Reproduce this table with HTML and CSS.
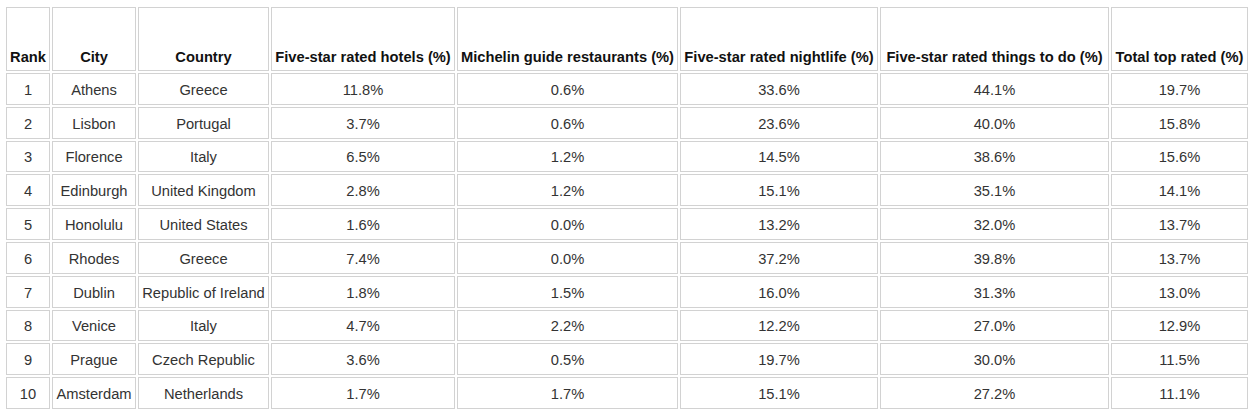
FILE: index.html
```html
<!DOCTYPE html>
<html>
<head>
<meta charset="utf-8">
<link rel="stylesheet" href="styles.css">
</head>
<body>
<table class="rank-table">
  <thead>
    <tr>
      <th class="c-rank">Rank</th>
      <th class="c-city">City</th>
      <th class="c-country">Country</th>
      <th class="c-hotels">Five-star rated hotels (%)</th>
      <th class="c-mich">Michelin guide restaurants (%)</th>
      <th class="c-night">Five-star rated nightlife (%)</th>
      <th class="c-things">Five-star rated things to do (%)</th>
      <th class="c-total">Total top rated (%)</th>
    </tr>
  </thead>
  <tbody>
    <tr><td>1</td><td>Athens</td><td>Greece</td><td>11.8%</td><td>0.6%</td><td>33.6%</td><td>44.1%</td><td>19.7%</td></tr>
    <tr><td>2</td><td>Lisbon</td><td>Portugal</td><td>3.7%</td><td>0.6%</td><td>23.6%</td><td>40.0%</td><td>15.8%</td></tr>
    <tr><td>3</td><td>Florence</td><td>Italy</td><td>6.5%</td><td>1.2%</td><td>14.5%</td><td>38.6%</td><td>15.6%</td></tr>
    <tr><td>4</td><td>Edinburgh</td><td>United Kingdom</td><td>2.8%</td><td>1.2%</td><td>15.1%</td><td>35.1%</td><td>14.1%</td></tr>
    <tr><td>5</td><td>Honolulu</td><td>United States</td><td>1.6%</td><td>0.0%</td><td>13.2%</td><td>32.0%</td><td>13.7%</td></tr>
    <tr><td>6</td><td>Rhodes</td><td>Greece</td><td>7.4%</td><td>0.0%</td><td>37.2%</td><td>39.8%</td><td>13.7%</td></tr>
    <tr><td>7</td><td>Dublin</td><td>Republic of Ireland</td><td>1.8%</td><td>1.5%</td><td>16.0%</td><td>31.3%</td><td>13.0%</td></tr>
    <tr><td>8</td><td>Venice</td><td>Italy</td><td>4.7%</td><td>2.2%</td><td>12.2%</td><td>27.0%</td><td>12.9%</td></tr>
    <tr><td>9</td><td>Prague</td><td>Czech Republic</td><td>3.6%</td><td>0.5%</td><td>19.7%</td><td>30.0%</td><td>11.5%</td></tr>
    <tr><td>10</td><td>Amsterdam</td><td>Netherlands</td><td>1.7%</td><td>1.7%</td><td>15.1%</td><td>27.2%</td><td>11.1%</td></tr>
  </tbody>
</table>
</body>
</html>
```

FILE: styles.css
```css
html, body {
  margin: 0;
  background: #ffffff;
}

body {
  padding: 5px 4px;
  font-family: "Liberation Sans", Arial, sans-serif;
  font-size: 14.7px;
}

.rank-table {
  border-collapse: separate;
  border-spacing: 2px;
  table-layout: fixed;
  width: 1246px;
}

.rank-table th,
.rank-table td {
  box-sizing: border-box;
  border: 1px solid #d2d2d2;
  text-align: center;
  padding: 0 1px;
  line-height: 17px;
  white-space: nowrap;
}

.rank-table th {
  height: 64px;
  vertical-align: bottom;
  padding-bottom: 4px;
  font-weight: bold;
  color: #111111;
}

.rank-table td {
  height: 31.8px;
  vertical-align: middle;
  padding-top: 3px;
  color: #333333;
}

.c-rank { width: 44px; }
.c-city { width: 84px; }
.c-country { width: 131px; }
.c-hotels { width: 184px; }
.c-mich { width: 221px; }
.c-night { width: 198px; }
.c-things { width: 229px; }
.c-total { width: 137px; }
```
